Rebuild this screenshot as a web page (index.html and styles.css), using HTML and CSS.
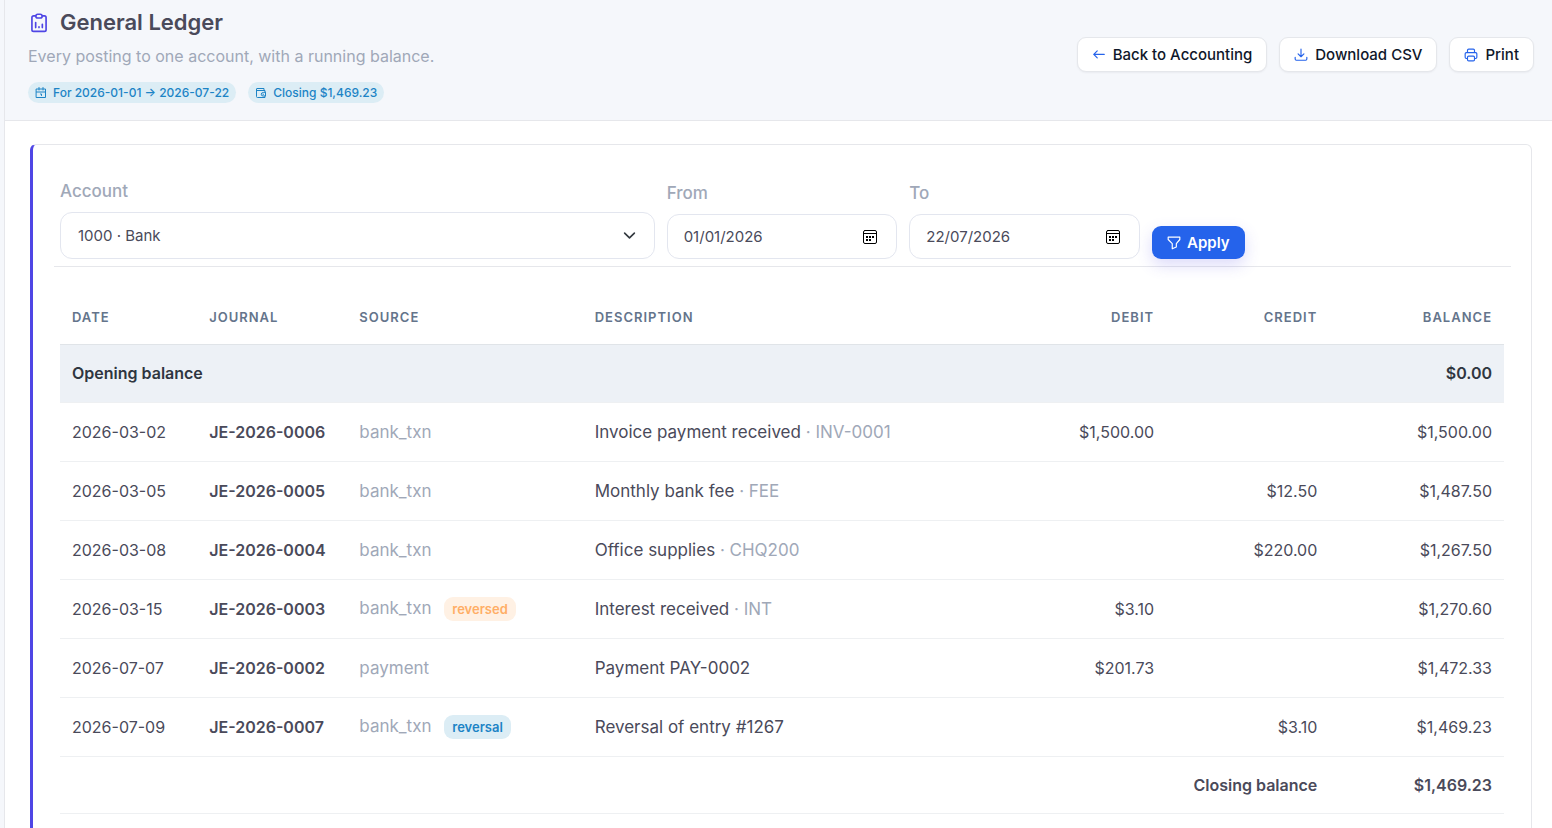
FILE: index.html
```html
<!DOCTYPE html>
<html lang="en">
<head>
  <meta charset="UTF-8">
  <meta name="viewport" content="width=device-width, initial-scale=1.0">
  <title>General Ledger</title>
  <link rel="stylesheet" href="styles.css">
</head>
<body>
  <div class="page">
    <header class="page-header">
      <div class="page-heading">
        <h1 class="page-title">
          <svg class="title-icon" viewBox="0 0 24 24"><path d="M8 3.500H5.500a2 2 0 0 0-2 2V20a2 2 0 0 0 2 2h13a2 2 0 0 0 2-2V5.500a2 2 0 0 0-2-2H16M10.500 1.500h3a2 2 0 0 1 0 4.500h-3a2 2 0 0 1 0-4.500zM8 17.500v-6M12 17.500v-1M16 17.500v-4"/></svg>
          General Ledger
        </h1>
        <p class="page-subtitle">Every posting to one account, with a running balance.</p>
        <div class="chips">
          <span class="chip">
            <svg class="chip-icon" viewBox="0 0 24 24"><path d="M3 4h18v17H3zM3 10h18M8 1v5M16 1v5M11 14h2v3"/></svg>
            For 2026-01-01 → 2026-07-22
          </span>
          <span class="chip">
            <svg class="chip-icon" viewBox="0 0 24 24"><path d="M18 7V3H4a1 1 0 0 0-1 1v3h17v3M3 5v14a2 2 0 0 0 2 2h15v-3M21 11v7h-5a3 3 0 0 1 0-7zM16 14.500h1"/></svg>
            Closing $1,469.23
          </span>
        </div>
      </div>
      <div class="page-actions">
        <a class="btn" href="#">
          <svg class="btn-icon" viewBox="0 0 24 24"><path d="M21 11H3M9 5l-6 6 6 6"/></svg>
          Back to Accounting
        </a>
        <a class="btn" href="#">
          <svg class="btn-icon" viewBox="0 0 24 24"><path d="M2 16v3a2 2 0 0 0 2 2h16a2 2 0 0 0 2-2v-3M7 10l5 5 5-5M12 15V2"/></svg>
          Download CSV
        </a>
        <button class="btn" type="button">
          <svg class="btn-icon" viewBox="0 0 24 24"><path d="M6 8V4a2 2 0 0 1 2-2h8a2 2 0 0 1 2 2v4M6 18H4a2 2 0 0 1-2-2v-6a2 2 0 0 1 2-2h16a2 2 0 0 1 2 2v6a2 2 0 0 1-2 2h-2M8 14h8a2 2 0 0 1 2 2v4a2 2 0 0 1-2 2H8a2 2 0 0 1-2-2v-4a2 2 0 0 1 2-2z"/></svg>
          Print
        </button>
      </div>
    </header>

    <main class="card">
      <form class="filters">
        <div class="field field-account">
          <label for="account">Account</label>
          <select id="account" name="account">
            <option selected>1000 · Bank</option>
          </select>
        </div>
        <div class="field">
          <label for="from">From</label>
          <div class="date-box">
            <input type="text" id="from" name="from" value="01/01/2026">
            <button class="date-btn" type="button" aria-label="Choose start date">
              <svg viewBox="0 0 16 16"><path d="M3 1.500h10a1.500 1.500 0 0 1 1.500 1.500v10a1.500 1.500 0 0 1-1.500 1.500H3A1.500 1.500 0 0 1 1.500 13V3A1.500 1.500 0 0 1 3 1.500zM1.500 4.500h13"/><path class="dots" d="M4 11h2M7 11h2M4 8h2M7 8h2M10 8h2"/></svg>
            </button>
          </div>
        </div>
        <div class="field">
          <label for="to">To</label>
          <div class="date-box">
            <input type="text" id="to" name="to" value="22/07/2026">
            <button class="date-btn" type="button" aria-label="Choose end date">
              <svg viewBox="0 0 16 16"><path d="M3 1.500h10a1.500 1.500 0 0 1 1.500 1.500v10a1.500 1.500 0 0 1-1.500 1.500H3A1.500 1.500 0 0 1 1.500 13V3A1.500 1.500 0 0 1 3 1.500zM1.500 4.500h13"/><path class="dots" d="M4 11h2M7 11h2M4 8h2M7 8h2M10 8h2"/></svg>
            </button>
          </div>
        </div>
        <button class="btn-apply" type="submit">
          <svg class="btn-icon" viewBox="0 0 24 24"><path d="M2 2h20v4l-6 7v6l-7 3v-9L2 6z"/></svg>
          Apply
        </button>
      </form>

      <table class="ledger">
        <colgroup>
          <col class="col-date">
          <col class="col-journal">
          <col class="col-source">
          <col>
          <col class="col-debit">
          <col class="col-credit">
          <col class="col-balance">
        </colgroup>
        <thead>
          <tr>
            <th>Date</th>
            <th>Journal</th>
            <th>Source</th>
            <th>Description</th>
            <th class="amount">Debit</th>
            <th class="amount">Credit</th>
            <th class="amount">Balance</th>
          </tr>
        </thead>
        <tbody>
          <tr class="opening">
            <td colspan="6">Opening balance</td>
            <td class="amount">$0.00</td>
          </tr>
          <tr>
            <td class="date">2026-03-02</td>
            <td class="journal">JE-2026-0006</td>
            <td class="muted">bank_txn</td>
            <td>Invoice payment received <span class="muted">· INV-0001</span></td>
            <td class="amount">$1,500.00</td>
            <td class="amount"></td>
            <td class="amount">$1,500.00</td>
          </tr>
          <tr>
            <td class="date">2026-03-05</td>
            <td class="journal">JE-2026-0005</td>
            <td class="muted">bank_txn</td>
            <td>Monthly bank fee <span class="muted">· FEE</span></td>
            <td class="amount"></td>
            <td class="amount">$12.50</td>
            <td class="amount">$1,487.50</td>
          </tr>
          <tr>
            <td class="date">2026-03-08</td>
            <td class="journal">JE-2026-0004</td>
            <td class="muted">bank_txn</td>
            <td>Office supplies <span class="muted">· CHQ200</span></td>
            <td class="amount"></td>
            <td class="amount">$220.00</td>
            <td class="amount">$1,267.50</td>
          </tr>
          <tr>
            <td class="date">2026-03-15</td>
            <td class="journal">JE-2026-0003</td>
            <td class="muted">bank_txn <span class="badge badge-warning">reversed</span></td>
            <td>Interest received <span class="muted">· INT</span></td>
            <td class="amount">$3.10</td>
            <td class="amount"></td>
            <td class="amount">$1,270.60</td>
          </tr>
          <tr>
            <td class="date">2026-07-07</td>
            <td class="journal">JE-2026-0002</td>
            <td class="muted">payment</td>
            <td>Payment PAY-0002</td>
            <td class="amount">$201.73</td>
            <td class="amount"></td>
            <td class="amount">$1,472.33</td>
          </tr>
          <tr>
            <td class="date">2026-07-09</td>
            <td class="journal">JE-2026-0007</td>
            <td class="muted">bank_txn <span class="badge badge-info">reversal</span></td>
            <td>Reversal of entry #1267</td>
            <td class="amount"></td>
            <td class="amount">$3.10</td>
            <td class="amount">$1,469.23</td>
          </tr>
        </tbody>
        <tfoot>
          <tr class="closing">
            <td colspan="6" class="amount">Closing balance</td>
            <td class="amount">$1,469.23</td>
          </tr>
        </tfoot>
      </table>
    </main>
  </div>
</body>
</html>
```
FILE: styles.css
```css
* {
  box-sizing: border-box;
}
html {
  overflow: hidden;
}
body {
  margin: 0;
  padding-left: 4px;
  background-color: #f5f7fb;
  color: #4a4a5a;
  font-family: Inter, "Liberation Sans", sans-serif;
  font-size: 17px;
}
svg {
  fill: none;
  stroke: currentColor;
  stroke-width: 2;
  stroke-linecap: round;
  stroke-linejoin: round;
}
.page {
  min-height: 100vh;
  border-left: 1px solid #e6e7eb;
  background-color: #fff;
}

/* Header */
.page-header {
  display: flex;
  align-items: center;
  justify-content: space-between;
  padding: 8px 18px 17px 23px;
  border-bottom: 1px solid #e6e7eb;
  background-color: #f5f7fb;
}
.page-title {
  display: flex;
  align-items: center;
  gap: 10px;
  margin: 0;
  font-size: 22px;
  font-weight: 600;
  line-height: 29px;
}
.title-icon {
  width: 22px;
  height: 20px;
  color: #4f46e5;
}
.page-subtitle {
  margin: 6px 0 13px;
  color: #a0a8b8;
  font-size: 16px;
  line-height: 26px;
}
.chips {
  display: flex;
  gap: 12px;
}
.chip {
  display: flex;
  align-items: center;
  gap: 6px;
  padding: 0 7px;
  border-radius: 11px;
  background-color: #dcedf5;
  color: #1c84c6;
  font-size: 12px;
  font-weight: 500;
  line-height: 21px;
}
.chip-icon {
  width: 12px;
  height: 12px;
}
.page-actions {
  display: flex;
  gap: 12px;
  padding-bottom: 2px;
}
.btn {
  display: flex;
  align-items: center;
  gap: 7px;
  padding: 0 14px;
  border: 1px solid #e5e7eb;
  border-radius: 9px;
  background-color: #fff;
  box-shadow: 0 1px 2px rgba(15, 23, 42, 0.05);
  color: #0f172a;
  font-family: inherit;
  font-size: 15px;
  font-weight: 500;
  line-height: 33px;
  text-decoration: none;
  cursor: pointer;
}
.btn-icon {
  width: 14px;
  height: 14px;
  color: #2563eb;
}

/* Card and filters */
.card {
  margin: 23px 20px 24px 25px;
  padding: 34px 27px 24px;
  border: 1px solid #e6e7eb;
  border-left: 3px solid #4f46e5;
  border-radius: 6px;
}
.filters {
  display: grid;
  grid-template-columns: repeat(12, minmax(0, 1fr));
  gap: 12px;
  align-items: end;
  margin: 0 -7px 23px -6px;
  padding: 0 7px 7px 6px;
  border-bottom: 1px solid #e6e7eb;
}
.field {
  grid-column: span 2;
}
.field-account {
  grid-column: span 5;
}
.field label {
  display: block;
  margin-bottom: 8px;
  color: #a0a8b8;
  font-size: 17px;
  font-weight: 500;
  line-height: 25px;
}
.field select {
  display: block;
  width: 100%;
  height: 47px;
  padding: 0 40px 0 17px;
  border: 1px solid #e3e6ef;
  border-radius: 12px;
  appearance: none;
  background: #fff url("data:image/svg+xml,%3Csvg xmlns='http://www.w3.org/2000/svg' viewBox='0 0 16 16'%3E%3Cpath fill='none' stroke='%23343a40' stroke-width='2' stroke-linecap='round' stroke-linejoin='round' d='m2 5 6 6 6-6'/%3E%3C/svg%3E") no-repeat right 18px center / 13px;
  color: inherit;
  font-family: inherit;
  font-size: 15px;
}
.date-box {
  display: flex;
  align-items: center;
  height: 45px;
  padding: 0 18px 0 16px;
  border: 1px solid #e3e6ef;
  border-radius: 12px;
}
.date-box input {
  flex: 1;
  min-width: 0;
  padding: 0;
  border: 0;
  background: none;
  color: inherit;
  font-family: inherit;
  font-size: 15px;
}
.date-btn {
  display: flex;
  padding: 0;
  border: 0;
  background: none;
  color: #000;
  cursor: pointer;
}
.date-btn svg {
  width: 16px;
  height: 16px;
  stroke-width: 1;
}
.date-btn .dots {
  stroke-width: 2;
  stroke-linecap: butt;
}
.btn-apply {
  display: flex;
  align-items: center;
  justify-self: start;
  gap: 6px;
  padding: 0 15px;
  border: 0;
  border-radius: 9px;
  background-color: #2563eb;
  box-shadow: 0 6px 16px rgba(79, 70, 229, 0.2);
  color: #fff;
  font-family: inherit;
  font-size: 15px;
  font-weight: 600;
  line-height: 33px;
  white-space: nowrap;
  cursor: pointer;
}
.btn-apply .btn-icon {
  color: #fff;
}

/* Ledger table */
.ledger {
  width: 100%;
  table-layout: fixed;
  border-collapse: collapse;
}
.col-date {
  width: 9.5%;
}
.col-journal {
  width: 10.4%;
}
.col-source {
  width: 16.3%;
}
.col-debit,
.col-credit {
  width: 11.3%;
}
.col-balance {
  width: 12.1%;
}
.ledger th,
.ledger td {
  padding: 0 12px;
  border-bottom: 1px solid #eef0f2;
  text-align: left;
  white-space: nowrap;
}
.ledger th {
  height: 54px;
  border-bottom-color: #e0e4e8;
  color: #64748b;
  font-size: 13px;
  font-weight: 600;
  letter-spacing: 1px;
  text-transform: uppercase;
}
.ledger td {
  height: 59px;
}
.ledger .amount {
  text-align: right;
}
.ledger .date,
.ledger .journal,
.ledger td.amount {
  font-size: 16px;
}
.ledger .journal {
  font-weight: 600;
}
.ledger .opening td,
.ledger .closing td {
  height: 57px;
  font-size: 16px;
  font-weight: 600;
}
.ledger .opening td {
  height: 58px;
  background-color: #edf1f6;
  color: #2f3640;
}
.muted {
  color: #a0a8b8;
}
.badge {
  display: inline-block;
  margin-left: 8px;
  padding: 0 8px;
  border-radius: 9px;
  font-size: 13px;
  font-weight: 600;
  line-height: 24px;
  vertical-align: middle;
}
.badge-warning {
  background-color: #fff1e4;
  color: #ffae66;
}
.badge-info {
  background-color: #dcedf5;
  color: #1c84c6;
}
```
